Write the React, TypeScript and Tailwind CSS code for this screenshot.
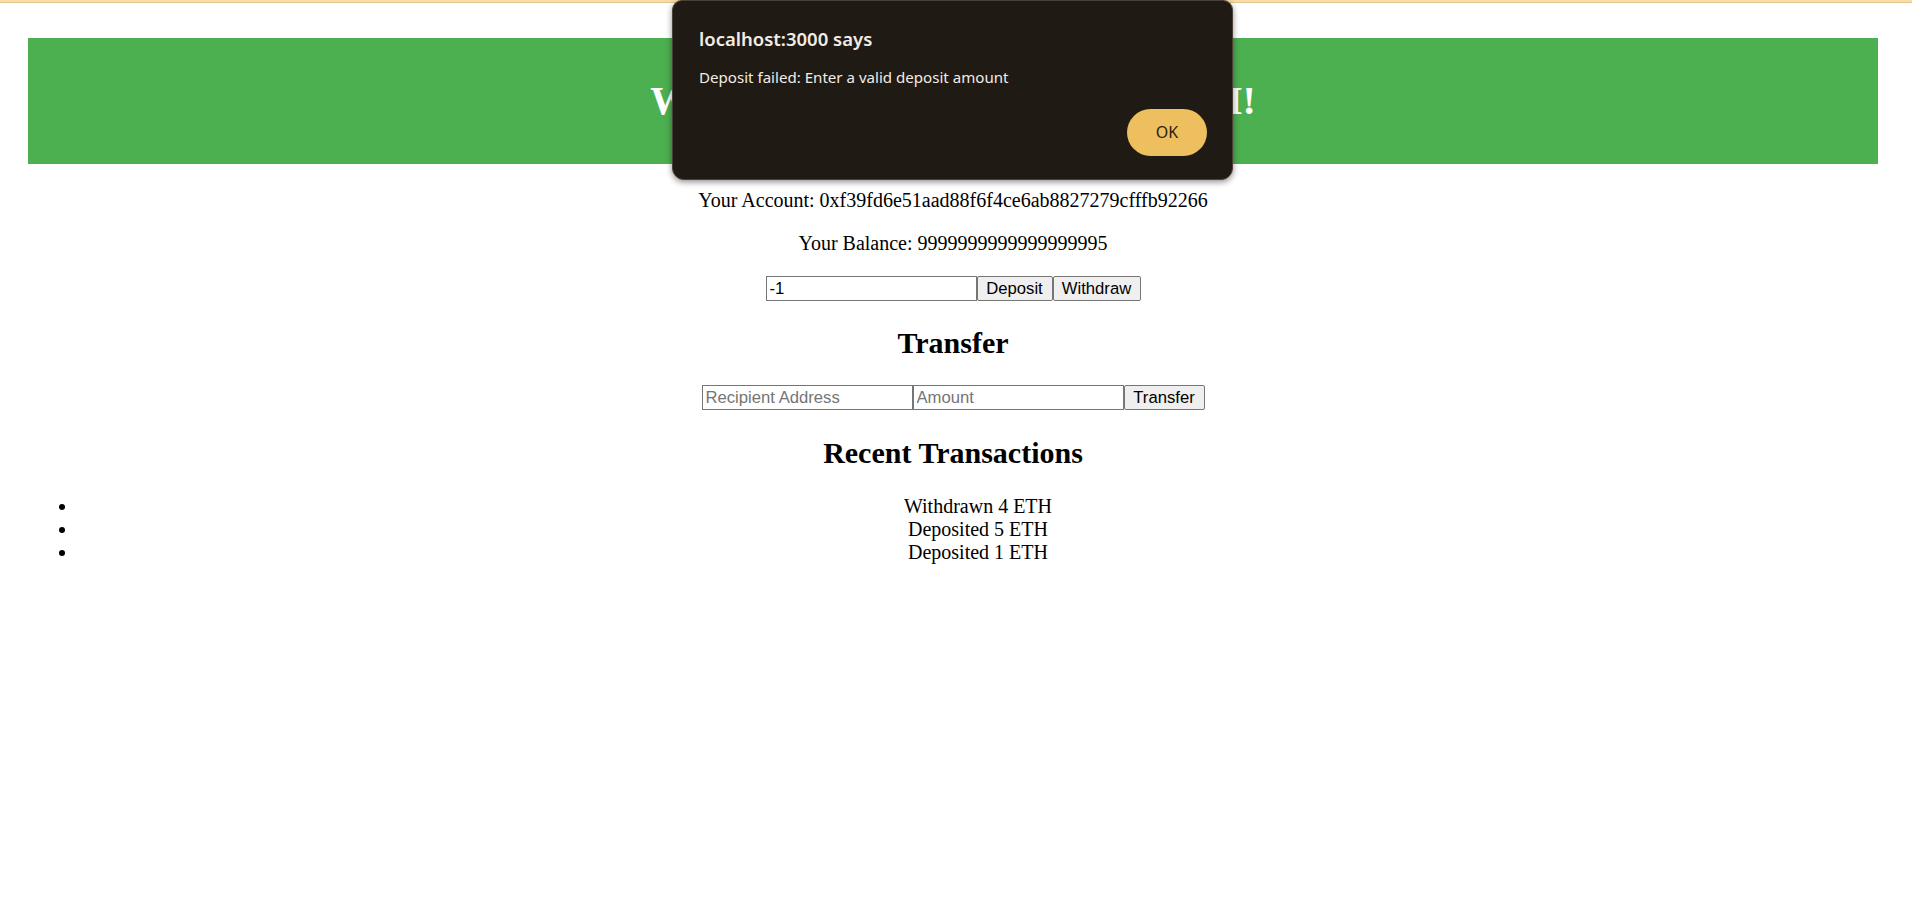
const Alert = () => (
  <div className="absolute left-[672px] top-0 flex h-[180px] w-[561px] flex-col rounded-b-[12px] rounded-t-[10px] border border-[#4a4036] bg-[#201a14] pl-[26px] pr-[25px] pt-[26px] font-['Noto_Sans',sans-serif] text-[#f2ece4] shadow-[0_2px_6px_rgba(0,0,0,0.45)]">
    <div className="text-[18.5px] font-semibold leading-[24px]">localhost:3000 says</div>
    <div className="mt-[16px] text-[15.1px] leading-[20px]">Deposit failed: Enter a valid deposit amount</div>
    <div className="mt-[22px] flex justify-end">
      <button className="h-[47px] w-[80px] rounded-full bg-[#edbf5f] text-[16px] text-[#2b2212]">OK</button>
    </div>
  </div>
);

const fieldCls =
  "h-[25px] border border-[#767676] bg-white px-[3px] font-['Liberation_Sans',Arial,sans-serif] text-[16.67px] text-black placeholder:text-[#757575] outline-none";
const btnCls =
  "h-[25px] rounded-[2px] border border-[#767676] bg-[#efefef] font-['Liberation_Sans',Arial,sans-serif] text-[16.67px] text-black";

const transactions = ['Withdrawn 4 ETH', 'Deposited 5 ETH', 'Deposited 1 ETH'];

export default function App() {
  return (
    <div className="relative min-h-screen bg-white font-['Liberation_Serif','Times_New_Roman',serif] text-[20px] leading-[23px] text-black">
      <div className="h-[3px] border-b border-[#e4c58b] bg-[#f5dca8]" />
      <div className="pl-[28px] pr-[34px] pt-[35px] text-center">
        <header className="flex h-[126px] items-center justify-center bg-[#4caf50]">
          <h1 className="text-[40px] font-bold leading-[46px] text-white">Welcome to the Metacrafters ATM!</h1>
        </header>

        <p className="mt-[25px]">Your Account: 0xf39fd6e51aad88f6f4ce6ab8827279cfffb92266</p>
        <p className="mt-[20px]">Your Balance: 9999999999999999995</p>

        <div className="mt-[21px] flex justify-center">
          <input className={`${fieldCls} w-[211px]`} defaultValue="-1" />
          <button className={`${btnCls} w-[76px]`}>Deposit</button>
          <button className={`${btnCls} w-[88px]`}>Withdraw</button>
        </div>

        <h2 className="mt-[25px] text-[30px] font-bold leading-[34px]">Transfer</h2>
        <div className="mt-[25px] flex justify-center">
          <input className={`${fieldCls} w-[211px]`} placeholder="Recipient Address" />
          <input className={`${fieldCls} w-[211px]`} placeholder="Amount" />
          <button className={`${btnCls} w-[81px]`}>Transfer</button>
        </div>

        <h2 className="mt-[26px] text-[30px] font-bold leading-[34px]">Recent Transactions</h2>
        <ul className="mt-[25px] list-outside list-disc pl-[50px]">
          {transactions.map((t) => (
            <li key={t} className="leading-[23px]">{t}</li>
          ))}
        </ul>
      </div>
      <Alert />
    </div>
  );
}
